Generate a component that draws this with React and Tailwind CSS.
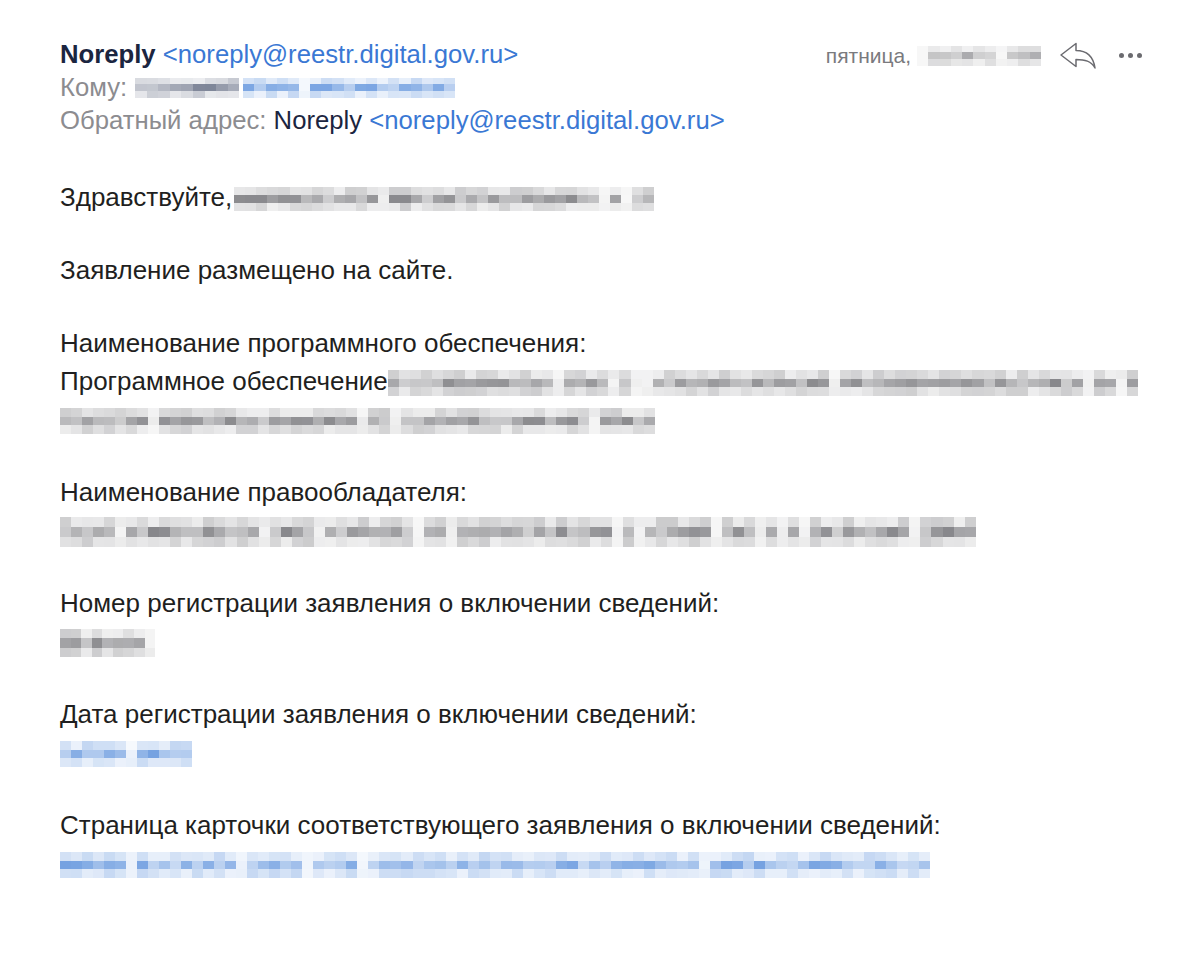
import React from 'react';

// Простой псевдослучайный генератор, чтобы "размытие" было стабильным
const rand = (seed) => {
  let s = seed;
  return () => {
    s = (s * 9301 + 49297) % 233280;
    return s / 233280;
  };
};

// Мозаика на месте скрытых данных
const Mosaic = ({ width, height = 24, tone = 'gray', seed = 1, className = '' }) => {
  const r = rand(seed);
  const cols = Math.round(width / 11);
  const base = tone === 'blue' ? [70, 130, 215] : tone === 'slate' ? [80, 90, 115] : [95, 95, 100];
  const cells = [];
  for (let i = 0; i < cols; i++) {
    const gap = r() < 0.1;
    const col = [0, 1, 2].map((row) => {
      let a = gap ? 0.05 + r() * 0.08 : (row === 1 ? 0.3 + r() * 0.45 : 0.1 + r() * 0.22);
      return `rgba(${base[0]},${base[1]},${base[2]},${a.toFixed(2)})`;
    });
    cells.push(col);
  }
  return (
    <span className={`inline-flex align-middle blur-[0.7px] ${className}`} style={{ width, height }}>
      {cells.map((col, i) => (
        <span key={i} className="flex flex-1 flex-col">
          {col.map((c, j) => (
            <span key={j} className="flex-1" style={{ backgroundColor: c }} />
          ))}
        </span>
      ))}
    </span>
  );
};

const ReplyIcon = () => (
  <svg width="38" height="28" viewBox="0 0 38 28" fill="none" stroke="#6b6b70" strokeWidth="1.5" strokeLinejoin="round">
    <path d="M2 13 L17 1.5 L17 8.5 C27 8.5 34 13 36 26 C32 19 26 17.5 17 17.5 L17 24.5 Z" />
  </svg>
);

const Para = ({ children }) => <div className="mt-[35px] first:mt-0">{children}</div>;

export default function App() {
  return (
    <div className="min-h-[964px] w-[1200px] bg-white text-[#1f1f21] font-['Liberation_Sans',Arial,sans-serif]">
      <div className="px-[60px] pt-[38px]">
        {/* Шапка письма */}
        <div className="flex items-start justify-between">
          <div className="text-[25.7px] leading-[33px]">
            <div>
              <span className="font-semibold text-[#1b2540]">Noreply</span>{' '}
              <span className="text-[#3a78d4]">&lt;noreply@reestr.digital.gov.ru&gt;</span>
            </div>
            <div className="flex items-center text-[#8c8c90]">
              <span>Кому:</span>
              <Mosaic width={104} height={20} tone="slate" seed={7} className="ml-[8px]" />
              <Mosaic width={212} height={20} tone="blue" seed={13} className="ml-[4px]" />
            </div>
            <div>
              <span className="text-[#8c8c90]">Обратный адрес:</span>{' '}
              <span className="text-[#1b2540]">Noreply</span>{' '}
              <span className="text-[#3a78d4]">&lt;noreply@reestr.digital.gov.ru&gt;</span>
            </div>
          </div>
          <div className="flex items-center pt-[2px] -mr-[2px]">
            <span className="text-[21px] text-[#7a7a7e]">пятница,</span>
            <Mosaic width={124} height={20} seed={21} className="ml-[6px] opacity-70" />
            <span className="ml-[18px]"><ReplyIcon /></span>
            <span className="ml-[22px] flex gap-[4px]">
              <span className="h-[5px] w-[5px] rounded-full bg-[#6b6b70]" />
              <span className="h-[5px] w-[5px] rounded-full bg-[#6b6b70]" />
              <span className="h-[5px] w-[5px] rounded-full bg-[#6b6b70]" />
            </span>
          </div>
        </div>

        {/* Тело письма */}
        <div className="mt-[41px] text-[26px] leading-[38px]">
          <Para>
            Здравствуйте,<Mosaic width={420} height={24} seed={3} className="ml-[2px]" />
          </Para>
          <Para>Заявление размещено на сайте.</Para>
          <Para>
            <div>Наименование программного обеспечения:</div>
            <div>
              Программное обеспечение<Mosaic width={750} height={26} seed={5} />
            </div>
            <div>
              <Mosaic width={595} height={26} seed={11} />
            </div>
          </Para>
          <Para>
            <div>Наименование правообладателя:</div>
            <div>
              <Mosaic width={915} height={30} seed={17} />
            </div>
          </Para>
          <Para>
            <div>Номер регистрации заявления о включении сведений:</div>
            <div>
              <Mosaic width={95} height={28} seed={29} />
            </div>
          </Para>
          <Para>
            <div>Дата регистрации заявления о включении сведений:</div>
            <div>
              <Mosaic width={132} height={26} tone="blue" seed={31} />
            </div>
          </Para>
          <Para>
            <div>Страница карточки соответствующего заявления о включении сведений:</div>
            <div>
              <Mosaic width={870} height={26} tone="blue" seed={37} />
            </div>
          </Para>
        </div>
      </div>
    </div>
  );
}
